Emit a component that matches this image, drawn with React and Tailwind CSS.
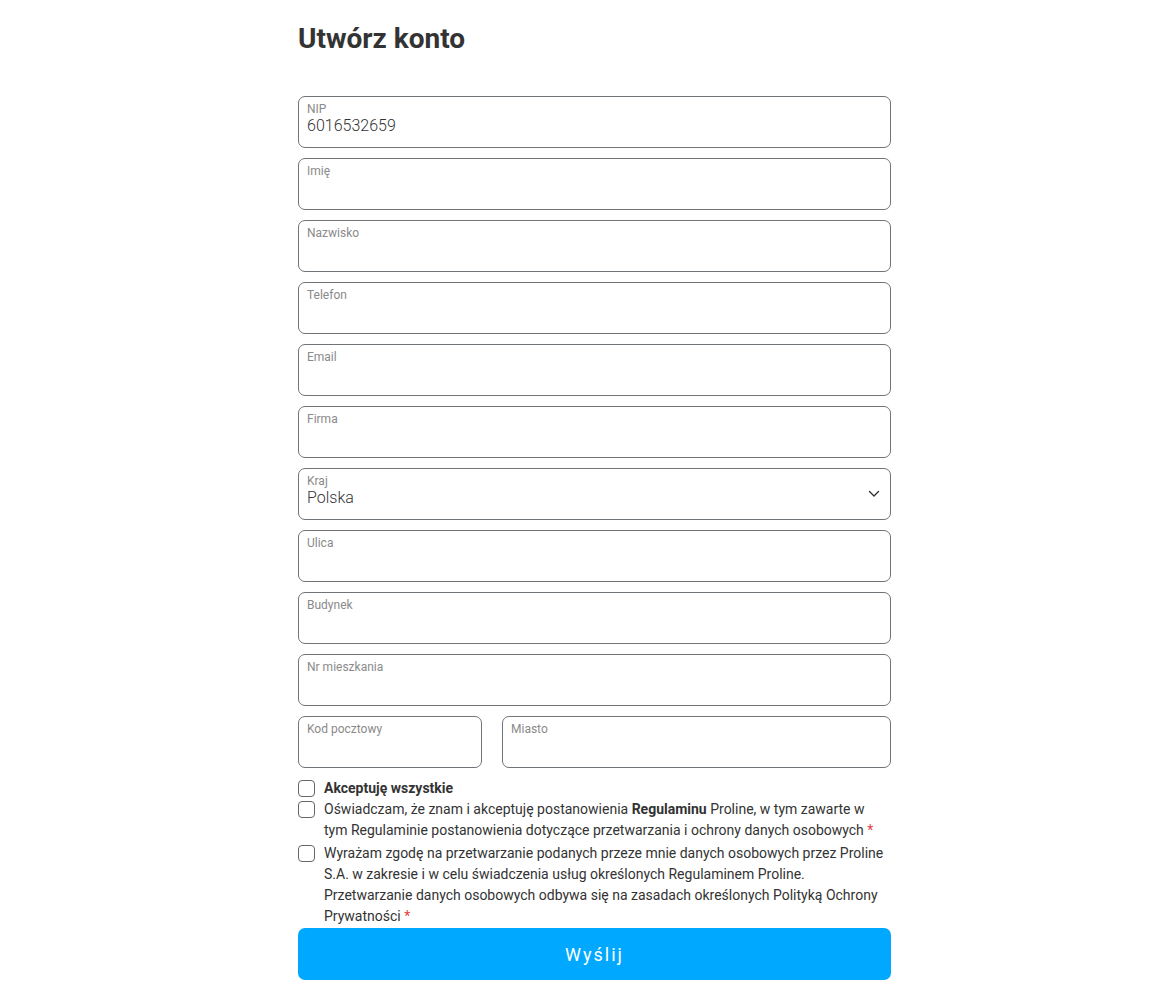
import React from "react";

function Field({ label, value, className = "", select = false }) {
  return (
    <div className={`relative h-[52px] rounded-[7px] border border-[#6f7479] bg-white px-2 pt-[6px] ${className}`}>
      <div className="text-[12px] leading-[13px] text-[#8a8a8a]">{label}</div>
      {value ? <div className="text-[16px] font-light leading-[20px] text-[#333]">{value}</div> : null}
      {select ? (
        <svg className="absolute right-[10px] top-[21px]" width="12" height="8" viewBox="0 0 12 8" fill="none">
          <path d="M1.5 1.5 L6 6 L10.5 1.5" stroke="#333" strokeWidth="1.4" strokeLinecap="round" strokeLinejoin="round" />
        </svg>
      ) : null}
    </div>
  );
}

function Check({ children, className = "" }) {
  return (
    <div className={`flex items-start gap-[9px] ${className}`}>
      <div className="mt-[2px] h-[17px] w-[17px] shrink-0 rounded-[4px] border border-[#666] bg-white" />
      <div className="text-[14px] leading-[21px] text-[#333]">{children}</div>
    </div>
  );
}

export default function App() {
  return (
    <div className="min-h-[990px] bg-white" style={{ fontFamily: "Roboto, 'Noto Sans', sans-serif" }}>
      <div className="ml-[298px] w-[593px] pt-[22px]">
        <h1 className="text-[28px] font-bold leading-[34px] text-[#333]">Utwórz konto</h1>
        <div className="mt-[40px] flex flex-col gap-[10px]">
          <Field label="NIP" value="6016532659" />
          <Field label="Imię" />
          <Field label="Nazwisko" />
          <Field label="Telefon" />
          <Field label="Email" />
          <Field label="Firma" />
          <Field label="Kraj" value="Polska" select />
          <Field label="Ulica" />
          <Field label="Budynek" />
          <Field label="Nr mieszkania" />
          <div className="flex gap-[20px]">
            <Field label="Kod pocztowy" className="w-[184px]" />
            <Field label="Miasto" className="flex-1" />
          </div>
        </div>
        <div className="mt-[10px]">
          <Check>
            <span className="font-bold">Akceptuję wszystkie</span>
          </Check>
          <Check>
            Oświadczam, że znam i akceptuję postanowienia <span className="font-bold">Regulaminu</span> Proline, w tym zawarte w tym Regulaminie postanowienia dotyczące przetwarzania i ochrony danych osobowych <span className="text-[#e53e3e]">*</span>
          </Check>
          <Check className="mt-[2px]">
            Wyrażam zgodę na przetwarzanie podanych przeze mnie danych osobowych przez Proline S.A. w zakresie i w celu świadczenia usług określonych Regulaminem Proline. Przetwarzanie danych osobowych odbywa się na zasadach określonych Polityką Ochrony Prywatności <span className="text-[#e53e3e]">*</span>
          </Check>
        </div>
        <button className="mt-[1px] flex h-[52px] w-full items-center justify-center rounded-[7px] bg-[#00a9ff] text-[18px] tracking-[2px] text-white">
          Wyślij
        </button>
      </div>
    </div>
  );
}
